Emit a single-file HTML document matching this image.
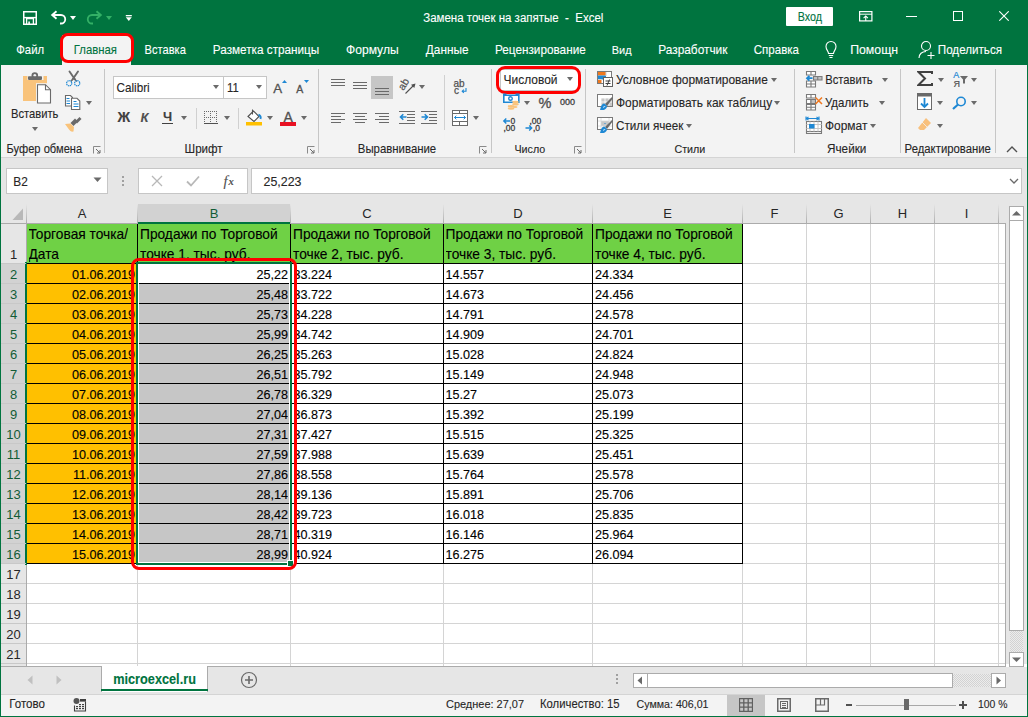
<!DOCTYPE html><html><head><meta charset="utf-8"><style>
*{box-sizing:border-box}
body{margin:0;width:1028px;height:717px;position:relative;overflow:hidden;background:#fff;font-family:"Liberation Sans",sans-serif;color:#262626}
.a{position:absolute}
.t{position:absolute;white-space:nowrap;line-height:1;-webkit-text-stroke:0.1px currentColor}
.tab{position:absolute;top:43px;font-size:12.5px;color:#fff;white-space:nowrap;line-height:14px;-webkit-text-stroke:0.1px currentColor}
.lbl{position:absolute;top:143px;font-size:12px;color:#262626;white-space:nowrap;line-height:13px}
.dd{position:absolute;width:0;height:0;border-left:3.5px solid transparent;border-right:3.5px solid transparent;border-top:4px solid #6a6a6a}
.sep{position:absolute;width:1px;background:#c8c8c8}
.rt{position:absolute;font-size:12.5px;color:#262626;white-space:nowrap;line-height:14px}
.cell{position:absolute;font-size:12.8px;color:#000;-webkit-text-stroke:0.12px #000;white-space:nowrap;line-height:14px;overflow:hidden}
.rh{position:absolute;left:1px;width:25px;font-size:13px;color:#222;text-align:center;line-height:14px}
.ch{position:absolute;top:207px;font-size:13px;color:#222;text-align:center;line-height:14px}
</style></head><body>

<div class="a" style="left:0;top:0;width:1028px;height:65px;background:#00743f"></div>
<svg class="a" style="left:22px;top:10px" width="16" height="16" viewBox="0 0 16 16">
<rect x="1.75" y="1.75" width="12.5" height="12.5" fill="none" stroke="#fff" stroke-width="1.5"/>
<path d="M2 7.6h12" stroke="#fff" stroke-width="1.4"/>
<path d="M4.6 15V8.6h6.8V15" fill="none" stroke="#fff" stroke-width="1.3"/>
<rect x="6.3" y="11.5" width="1.6" height="3.5" fill="#fff"/></svg>
<svg class="a" style="left:50px;top:9px" width="20" height="18" viewBox="0 0 20 18">
<path d="M6.5 2.3L2.2 6l4.3 3.7" fill="none" stroke="#fff" stroke-width="1.9"/>
<path d="M2.5 6H11A4.25 4.25 0 0 1 11 14.5H10" fill="none" stroke="#fff" stroke-width="1.8"/></svg>
<div class="dd" style="left:70px;top:16px;border-top-color:#fff"></div>
<svg class="a" style="left:83.2px;top:9px;transform:scaleX(-1)" width="20" height="18" viewBox="0 0 20 18">
<path d="M6.5 2.3L2.2 6l4.3 3.7" fill="none" stroke="#33b066" stroke-width="1.9"/>
<path d="M2.5 6H11A4.25 4.25 0 0 1 11 14.5H10" fill="none" stroke="#33b066" stroke-width="1.8"/></svg>
<div class="dd" style="left:106px;top:16px;border-top-color:#33b066"></div>
<svg class="a" style="left:125px;top:14px" width="8" height="8" viewBox="0 0 8 8"><rect x="0.8" y="1" width="6" height="1.3" fill="#fff"/><path d="M0.8 3.3h6L3.8 7z" fill="#fff"/></svg>
<div class="t" style="left:423.2px;top:13.27px;font-size:11.5px;color:#fff;transform:scaleY(1.1);transform-origin:0 9.73px">Замена точек на запятые&nbsp; - &nbsp;Excel</div>
<div class="a" style="left:786px;top:7px;width:47px;height:19px;background:#fff;border-radius:1px"></div>
<div class="t" style="left:797.8px;top:11.94px;font-size:10.7px;color:#00743f;transform:scaleY(1.15);transform-origin:0 9.06px">Вход</div>
<svg class="a" style="left:858px;top:10px" width="16" height="13" viewBox="0 0 16 13">
<rect x="1.6" y="1.6" width="12.3" height="9.3" fill="none" stroke="#fff" stroke-width="1.2"/>
<path d="M1.5 4.2h12.5" stroke="#fff" stroke-width="1"/><path d="M7.75 11V6M5.6 8.1l2.15-2.15 2.15 2.15" fill="none" stroke="#fff" stroke-width="1.1"/></svg>
<div class="a" style="left:906px;top:16px;width:11px;height:1px;background:#fff"></div>
<div class="a" style="left:953px;top:11px;width:10px;height:10px;border:1px solid #fff"></div>
<svg class="a" style="left:999px;top:11px" width="10" height="10" viewBox="0 0 10 10">
<path d="M0.3 0.3L9.7 9.7M9.7 0.3L0.3 9.7" stroke="#fff" stroke-width="1.1"/></svg>
<div class="a" style="left:62px;top:35px;width:69px;height:30px;background:#f3f3f3"></div>
<div class="tab" style="left:16.3px;color:#fff;font-size:11.27px;top:45.46px;line-height:1;transform:scaleY(1.08);transform-origin:0 9.54px">Файл</div>
<div class="tab" style="left:73.8px;color:#00743f;font-size:11.35px;top:45.39px;line-height:1;transform:scaleY(1.08);transform-origin:0 9.61px">Главная</div>
<div class="tab" style="left:144.6px;color:#fff;font-size:11.1px;top:44.60px;line-height:1;transform:scaleY(1.08);transform-origin:0 9.40px">Вставка</div>
<div class="tab" style="left:212.8px;color:#fff;font-size:11.74px;top:44.06px;line-height:1;transform:scaleY(1.08);transform-origin:0 9.94px">Разметка страницы</div>
<div class="tab" style="left:346px;color:#fff;font-size:12.1px;top:43.76px;line-height:1;transform:scaleY(1.08);transform-origin:0 10.24px">Формулы</div>
<div class="tab" style="left:425.8px;color:#fff;font-size:11.83px;top:44.99px;line-height:1;transform:scaleY(1.08);transform-origin:0 10.01px">Данные</div>
<div class="tab" style="left:495px;color:#fff;font-size:11.75px;top:44.05px;line-height:1;transform:scaleY(1.08);transform-origin:0 9.95px">Рецензирование</div>
<div class="tab" style="left:611.8px;color:#fff;font-size:10.92px;top:44.76px;line-height:1;transform:scaleY(1.08);transform-origin:0 9.24px">Вид</div>
<div class="tab" style="left:658.2px;color:#fff;font-size:11.88px;top:44.94px;line-height:1;transform:scaleY(1.08);transform-origin:0 10.06px">Разработчик</div>
<div class="tab" style="left:753.8px;color:#fff;font-size:11.53px;top:45.24px;line-height:1;transform:scaleY(1.08);transform-origin:0 9.76px">Справка</div>
<div class="tab" style="left:850.2px;color:#fff;font-size:12.3px;top:43.59px;line-height:1;transform:scaleY(1.08);transform-origin:0 10.41px">Помощн</div>
<div class="tab" style="left:937.8px;color:#fff;font-size:11.64px;top:44.15px;line-height:1;transform:scaleY(1.08);transform-origin:0 9.85px">Поделиться</div>
<svg class="a" style="left:824px;top:40px" width="14" height="20" viewBox="0 0 14 20">
<path d="M4.5 13.5C4.5 11 2 10 2 6.5a5 5 0 0 1 10 0c0 3.5-2.5 4.5-2.5 7z" fill="none" stroke="#fff" stroke-width="1.1"/>
<path d="M4.8 15.5h4.4M5.5 17.5h3" stroke="#fff" stroke-width="1.1"/></svg>
<svg class="a" style="left:918px;top:40px" width="18" height="20" viewBox="0 0 18 20">
<circle cx="8" cy="6" r="4.5" fill="none" stroke="#fff" stroke-width="1.1"/>
<path d="M1 18c0-4 3-6.5 7-6.5" fill="none" stroke="#fff" stroke-width="1.1"/>
<path d="M13 12v7M9.5 15.5h7" stroke="#fff" stroke-width="1.1"/></svg>
<div class="a" style="left:60px;top:33px;width:74px;height:30px;border:3px solid #ff0000;border-radius:8px"></div>
<div class="a" style="left:1px;top:65px;width:1026px;height:92px;background:#f3f3f3"></div>
<div class="a" style="left:1px;top:157px;width:1026px;height:1px;background:#d4d4d4"></div>
<svg class="a" style="left:18px;top:66px" width="40" height="40" viewBox="0 0 40 40">
<rect x="5" y="10" width="24" height="25" fill="#f9c37b"/>
<rect x="9.5" y="9" width="16" height="5" fill="#f3f3f3"/>
<rect x="10" y="10.3" width="14" height="3.6" rx="0.8" fill="#6a6a6a"/>
<circle cx="16.8" cy="9.6" r="2.4" fill="none" stroke="#6a6a6a" stroke-width="1.8"/>
<rect x="18" y="17.2" width="16" height="20.5" fill="#f3f3f3"/>
<path d="M19.5 18.7h8l5 5v13.3h-13z" fill="#fff" stroke="#6a6a6a" stroke-width="1.1"/>
<path d="M27.5 18.7v5h5" fill="none" stroke="#6a6a6a" stroke-width="1.1"/>
</svg>
<div class="t" style="left:11px;top:108.52px;font-size:11.2px;color:#262626;transform:scaleY(1.08);transform-origin:0 9.48px;">Вставить</div>
<div class="dd" style="left:31.5px;top:127px;border-top-color:#6a6a6a"></div>
<svg class="a" style="left:60px;top:66px" width="40" height="70" viewBox="0 0 40 70">
<path d="M9.5 5.5L15 13.5M18 5.5L12.5 13.5" stroke="#6a6a6a" stroke-width="1.9" stroke-linecap="round"/>
<path d="M13.8 12l-3 3.5M13.8 12l3 3.5" stroke="#6a6a6a" stroke-width="1.3"/>
<circle cx="9.2" cy="17.3" r="2.6" fill="none" stroke="#1e88d4" stroke-width="1.2" stroke-dasharray="1.4 0.6"/>
<circle cx="17.2" cy="17.3" r="2.6" fill="none" stroke="#1e88d4" stroke-width="1.2" stroke-dasharray="1.4 0.6"/>
<path d="M5.5 29.5h5l2 2v8.5h-7z" fill="#fff" stroke="#6a6a6a" stroke-width="1.1"/>
<path d="M6.5 32.5h3M6.5 35h3.5M6.5 37.5h3.5" stroke="#1e88d4" stroke-width="1"/>
<path d="M11.5 32.3h5.5l2.8 2.8v8.4h-8.3z" fill="#fff" stroke="#6a6a6a" stroke-width="1.1"/>
<path d="M13.5 35.5h3M13.5 38h5M13.5 40.5h5" stroke="#1e88d4" stroke-width="1"/>
<path d="M16 56.5l4.5-4.5" stroke="#6a6a6a" stroke-width="2.8"/>
<path d="M10.5 57l4.5-4.5 3 3-4.5 4.5z" fill="#6a6a6a"/>
<path d="M5 58l5.5-0.5 3.5 3.5-0.5 4.5c-2 0.5-3.5-0.5-4.5-2z" fill="#f9c37b"/>
</svg>
<div class="dd" style="left:85.8px;top:101px;border-top-color:#6a6a6a"></div>
<div class="t" style="left:6.5px;top:143.56px;font-size:11.15px;color:#262626;transform:scaleY(1.08);transform-origin:0 9.44px;">Буфер обмена</div>
<svg class="a" style="left:93px;top:146px" width="8" height="8" viewBox="0 0 8 8">
<path d="M0.5 7.5V0.5H7.5" fill="none" stroke="#8a8a8a" stroke-width="1"/><path d="M3 3l4 4M7 4v3H4" fill="none" stroke="#6a6a6a" stroke-width="1"/></svg>
<div class="a" style="left:104px;top:69px;width:1px;height:84px;background:#c6c6c6"></div>
<div class="a" style="left:113px;top:76px;width:111px;height:23px;background:#fff;border:1px solid #c6c6c6"></div>
<div class="a" style="left:223px;top:76px;width:44px;height:23px;background:#fff;border:1px solid #c6c6c6"></div>
<div class="t" style="left:116.5px;top:82.10px;font-size:11.7px;color:#262626;transform:scaleY(1.08);transform-origin:0 9.90px;">Calibri</div>
<div class="dd" style="left:212.5px;top:85px;border-top-color:#6a6a6a"></div>
<div class="t" style="left:227px;top:83.43px;font-size:11.3px;color:#262626;transform:scaleY(1.08);transform-origin:0 9.57px;">11</div>
<div class="dd" style="left:255.5px;top:85px;border-top-color:#6a6a6a"></div>
<div class="t" style="left:273.3px;top:81.74px;font-size:13.3px;color:#505050;-webkit-text-stroke:0.3px #505050">A</div>
<svg class="a" style="left:281.5px;top:80px" width="5" height="3"><path d="M0 3L2.5 0 5 3z" fill="#1e88d4"/></svg>
<div class="t" style="left:296.3px;top:84.11px;font-size:10.5px;color:#505050;-webkit-text-stroke:0.3px #505050">A</div>
<svg class="a" style="left:303.5px;top:80px" width="5" height="3"><path d="M0 0L2.5 3 5 0z" fill="#1e88d4"/></svg>
<div class="t" style="left:117.5px;top:110.15px;font-size:14px;color:#404040;font-weight:bold">Ж</div>
<div class="t" style="left:140.5px;top:111.00px;font-size:13px;color:#505050;font-style:italic;font-weight:bold">К</div>
<div class="t" style="left:163px;top:110.00px;font-size:13px;color:#404040;font-weight:bold">Ч</div>
<div class="a" style="left:162px;top:123px;width:11px;height:1px;background:#404040"></div>
<div class="dd" style="left:180.5px;top:116px;border-top-color:#6a6a6a"></div>
<div class="a" style="left:196px;top:108px;width:1px;height:21px;background:#d0d0d0"></div>
<svg class="a" style="left:204px;top:111px" width="14" height="14" viewBox="0 0 14 14"><rect x="0" y="0" width="1" height="1" fill="#6a6a6a"/><rect x="6" y="0" width="1" height="1" fill="#6a6a6a"/><rect x="12" y="0" width="1" height="1" fill="#6a6a6a"/><rect x="0" y="2" width="1" height="1" fill="#6a6a6a"/><rect x="6" y="2" width="1" height="1" fill="#6a6a6a"/><rect x="12" y="2" width="1" height="1" fill="#6a6a6a"/><rect x="0" y="4" width="1" height="1" fill="#6a6a6a"/><rect x="6" y="4" width="1" height="1" fill="#6a6a6a"/><rect x="12" y="4" width="1" height="1" fill="#6a6a6a"/><rect x="0" y="6" width="1" height="1" fill="#6a6a6a"/><rect x="6" y="6" width="1" height="1" fill="#6a6a6a"/><rect x="12" y="6" width="1" height="1" fill="#6a6a6a"/><rect x="0" y="8" width="1" height="1" fill="#6a6a6a"/><rect x="6" y="8" width="1" height="1" fill="#6a6a6a"/><rect x="12" y="8" width="1" height="1" fill="#6a6a6a"/><rect x="0" y="10" width="1" height="1" fill="#6a6a6a"/><rect x="6" y="10" width="1" height="1" fill="#6a6a6a"/><rect x="12" y="10" width="1" height="1" fill="#6a6a6a"/><rect x="0" y="12" width="1" height="1" fill="#6a6a6a"/><rect x="6" y="12" width="1" height="1" fill="#6a6a6a"/><rect x="12" y="12" width="1" height="1" fill="#6a6a6a"/><rect x="2" y="0" width="1" height="1" fill="#6a6a6a"/><rect x="2" y="6" width="1" height="1" fill="#6a6a6a"/><rect x="4" y="0" width="1" height="1" fill="#6a6a6a"/><rect x="4" y="6" width="1" height="1" fill="#6a6a6a"/><rect x="6" y="0" width="1" height="1" fill="#6a6a6a"/><rect x="6" y="6" width="1" height="1" fill="#6a6a6a"/><rect x="8" y="0" width="1" height="1" fill="#6a6a6a"/><rect x="8" y="6" width="1" height="1" fill="#6a6a6a"/><rect x="10" y="0" width="1" height="1" fill="#6a6a6a"/><rect x="10" y="6" width="1" height="1" fill="#6a6a6a"/>
<rect x="0" y="12" width="14" height="1" fill="#505050"/></svg>
<div class="dd" style="left:223.5px;top:116px;border-top-color:#6a6a6a"></div>
<div class="a" style="left:238px;top:108px;width:1px;height:21px;background:#d0d0d0"></div>
<svg class="a" style="left:245px;top:108px" width="18" height="18" viewBox="0 0 18 18">
<path d="M3 8.5l5.5-5.5 5.5 5.5-5 5z" fill="#fff" stroke="#505050" stroke-width="1.1"/><path d="M7.5 1.5v5" stroke="#505050" stroke-width="1.1"/>
<path d="M13.5 6.5c2 1 2.5 3 2 4.5" fill="none" stroke="#1e88d4" stroke-width="1.8"/>
<rect x="1" y="14" width="16" height="3.5" fill="#ffc000"/></svg>
<div class="dd" style="left:266.5px;top:116px;border-top-color:#6a6a6a"></div>
<div class="t" style="left:283.5px;top:110.15px;font-size:14px;color:#505050;-webkit-text-stroke:0.3px #505050">A</div>
<div class="a" style="left:280px;top:122px;width:16px;height:4px;background:#e81123"></div>
<div class="dd" style="left:300.5px;top:116px;border-top-color:#6a6a6a"></div>
<div class="t" style="left:184.5px;top:143.18px;font-size:11.6px;color:#262626;transform:scaleY(1.08);transform-origin:0 9.82px;">Шрифт</div>
<svg class="a" style="left:307px;top:146px" width="8" height="8" viewBox="0 0 8 8">
<path d="M0.5 7.5V0.5H7.5" fill="none" stroke="#8a8a8a" stroke-width="1"/><path d="M3 3l4 4M7 4v3H4" fill="none" stroke="#6a6a6a" stroke-width="1"/></svg>
<div class="a" style="left:318px;top:69px;width:1px;height:84px;background:#c6c6c6"></div>
<div class="a" style="left:331px;top:79px;width:14px;height:1px;background:#6a6a6a"></div>
<div class="a" style="left:331px;top:82px;width:14px;height:1px;background:#6a6a6a"></div>
<div class="a" style="left:331px;top:85px;width:14px;height:1px;background:#6a6a6a"></div>
<div class="a" style="left:353px;top:82px;width:14px;height:1px;background:#6a6a6a"></div>
<div class="a" style="left:353px;top:85px;width:14px;height:1px;background:#6a6a6a"></div>
<div class="a" style="left:353px;top:88px;width:14px;height:1px;background:#6a6a6a"></div>
<div class="a" style="left:371px;top:76px;width:22px;height:23px;background:#c6c6c6"></div>
<div class="a" style="left:375px;top:88px;width:14px;height:1px;background:#6a6a6a"></div>
<div class="a" style="left:375px;top:91px;width:14px;height:1px;background:#6a6a6a"></div>
<div class="a" style="left:375px;top:94px;width:14px;height:1px;background:#6a6a6a"></div>
<svg class="a" style="left:397px;top:76px" width="22" height="20" viewBox="0 0 22 20">
<text x="0" y="0" font-size="10.5" font-family="Liberation Sans" fill="#505050" stroke="#505050" stroke-width="0.2" transform="translate(6.5 15) rotate(-58)">ab</text>
<path d="M8.5 17.5L17.5 8.5" stroke="#505050" stroke-width="1.1"/><path d="M18.5 7.5l-4.5 1.2 3.3 3.3z" fill="#505050"/></svg>
<div class="dd" style="left:418.5px;top:85px;border-top-color:#6a6a6a"></div>
<div class="a" style="left:331px;top:113px;width:14px;height:1px;background:#6a6a6a"></div>
<div class="a" style="left:331px;top:116px;width:10px;height:1px;background:#6a6a6a"></div>
<div class="a" style="left:331px;top:119px;width:14px;height:1px;background:#6a6a6a"></div>
<div class="a" style="left:331px;top:122px;width:10px;height:1px;background:#6a6a6a"></div>
<div class="a" style="left:353px;top:113px;width:14px;height:1px;background:#6a6a6a"></div>
<div class="a" style="left:355px;top:116px;width:10px;height:1px;background:#6a6a6a"></div>
<div class="a" style="left:353px;top:119px;width:14px;height:1px;background:#6a6a6a"></div>
<div class="a" style="left:355px;top:122px;width:10px;height:1px;background:#6a6a6a"></div>
<div class="a" style="left:375px;top:113px;width:14px;height:1px;background:#6a6a6a"></div>
<div class="a" style="left:379px;top:116px;width:10px;height:1px;background:#6a6a6a"></div>
<div class="a" style="left:375px;top:119px;width:14px;height:1px;background:#6a6a6a"></div>
<div class="a" style="left:379px;top:122px;width:10px;height:1px;background:#6a6a6a"></div>
<div class="a" style="left:399px;top:111px;width:16px;height:1px;background:#6a6a6a"></div>
<div class="a" style="left:407px;top:114px;width:8px;height:1px;background:#6a6a6a"></div>
<div class="a" style="left:407px;top:117px;width:8px;height:1px;background:#6a6a6a"></div>
<div class="a" style="left:407px;top:120px;width:8px;height:1px;background:#6a6a6a"></div>
<div class="a" style="left:399px;top:123px;width:16px;height:1px;background:#6a6a6a"></div>
<svg class="a" style="left:399px;top:113px" width="8" height="8"><path d="M7.5 4H1.5M4.3 1.2L1.5 4l2.8 2.8" fill="none" stroke="#1e88d4" stroke-width="1.6"/></svg>
<div class="a" style="left:421px;top:111px;width:16px;height:1px;background:#6a6a6a"></div>
<div class="a" style="left:429px;top:114px;width:8px;height:1px;background:#6a6a6a"></div>
<div class="a" style="left:429px;top:117px;width:8px;height:1px;background:#6a6a6a"></div>
<div class="a" style="left:429px;top:120px;width:8px;height:1px;background:#6a6a6a"></div>
<div class="a" style="left:421px;top:123px;width:16px;height:1px;background:#6a6a6a"></div>
<svg class="a" style="left:421px;top:113px" width="8" height="8"><path d="M0.5 4h6M3.7 1.2L6.5 4 3.7 6.8" fill="none" stroke="#1e88d4" stroke-width="1.6"/></svg>
<div class="a" style="left:444px;top:75px;width:1px;height:55px;background:#d0d0d0"></div>
<div class="t" style="left:453.5px;top:78.53px;font-size:10px;color:#505050;-webkit-text-stroke:0.25px #505050">ab</div>
<div class="t" style="left:454px;top:85.53px;font-size:10px;color:#505050;-webkit-text-stroke:0.25px #505050">c</div>
<svg class="a" style="left:460.5px;top:88px" width="6" height="6"><path d="M5 0v3.2H1.2M2.8 1.6L1.2 3.2l1.6 1.6" fill="none" stroke="#1e88d4" stroke-width="1.1"/></svg>
<svg class="a" style="left:452px;top:110px" width="16" height="16" viewBox="0 0 16 16">
<rect x="0.5" y="0.5" width="15" height="15" fill="#fff" stroke="#6a6a6a"/><path d="M0.5 3.5h15M0.5 11.5h15M7.5 0.5v3M7.5 11.5v4" stroke="#6a6a6a"/>
<path d="M2.5 7.5h11M4.3 5.7L2.5 7.5l1.8 1.8M11.7 5.7L13.5 7.5l-1.8 1.8" fill="none" stroke="#1e88d4" stroke-width="1"/></svg>
<div class="dd" style="left:472.5px;top:116px;border-top-color:#6a6a6a"></div>
<div class="t" style="left:357.8px;top:144.35px;font-size:11.4px;color:#262626;transform:scaleY(1.08);transform-origin:0 9.65px;">Выравнивание</div>
<svg class="a" style="left:479px;top:146px" width="8" height="8" viewBox="0 0 8 8">
<path d="M0.5 7.5V0.5H7.5" fill="none" stroke="#8a8a8a" stroke-width="1"/><path d="M3 3l4 4M7 4v3H4" fill="none" stroke="#6a6a6a" stroke-width="1"/></svg>
<div class="a" style="left:491px;top:69px;width:1px;height:84px;background:#c6c6c6"></div>
<div class="a" style="left:500px;top:69px;width:79px;height:22px;background:#fff;border:1px solid #c6c6c6"></div>
<div class="t" style="left:503.6px;top:74.88px;font-size:11.95px;color:#262626;transform:scaleY(1.08);transform-origin:0 10.12px;">Числовой</div>
<div class="dd" style="left:566.5px;top:77px;border-top-color:#6a6a6a"></div>
<div class="a" style="left:496px;top:66px;width:85px;height:28px;border:3px solid #ff0000;border-radius:9px"></div>
<svg class="a" style="left:502px;top:93px" width="20" height="18" viewBox="0 0 20 18">
<path d="M1.8 2.2h15v7h-15z" fill="#fff" stroke="#1e88d4" stroke-width="1.6"/>
<path d="M1 1.4h3.5M13.5 1.4h4" stroke="#1e88d4" stroke-width="1.6"/>
<circle cx="8.5" cy="5.5" r="1.8" fill="none" stroke="#1e88d4" stroke-width="1.4"/>
<ellipse cx="13.5" cy="9" rx="3.3" ry="1.2" fill="#f9c37b"/><ellipse cx="13.5" cy="11.3" rx="3.3" ry="1.2" fill="#f9c37b"/>
<ellipse cx="9" cy="13.2" rx="3.3" ry="1.2" fill="#f9c37b"/><ellipse cx="9" cy="15.5" rx="3.3" ry="1.2" fill="#f9c37b"/>
<ellipse cx="13" cy="14" rx="2.5" ry="1" fill="#f9c37b"/></svg>
<div class="dd" style="left:523.5px;top:101px;border-top-color:#6a6a6a"></div>
<div class="t" style="left:538.5px;top:95.73px;font-size:14.5px;color:#505050;-webkit-text-stroke:0.35px #505050">%</div>
<div class="t" style="left:560px;top:97.68px;font-size:9px;color:#404040;-webkit-text-stroke:0.3px #404040">000</div>
<svg class="a" style="left:502px;top:116px" width="18" height="18" viewBox="0 0 18 18">
<path d="M8 5H1.8M4.3 2.5L1.8 5l2.5 2.5" fill="none" stroke="#1e88d4" stroke-width="1.4"/>
<text x="8.5" y="8.3" font-size="8.5" font-family="Liberation Sans" fill="#404040" stroke="#404040" stroke-width="0.3">0</text>
<text x="1.5" y="15" font-size="8.5" font-family="Liberation Sans" fill="#404040" stroke="#404040" stroke-width="0.3">,00</text></svg>
<svg class="a" style="left:524px;top:116px" width="18" height="18" viewBox="0 0 18 18">
<text x="5.5" y="8.3" font-size="8.5" font-family="Liberation Sans" fill="#404040" stroke="#404040" stroke-width="0.3">,00</text>
<path d="M1.5 12h6.2M5.2 9.5L7.7 12l-2.5 2.5" fill="none" stroke="#1e88d4" stroke-width="1.4"/>
<text x="9" y="15" font-size="8.5" font-family="Liberation Sans" fill="#404040" stroke="#404040" stroke-width="0.3">,0</text></svg>
<div class="t" style="left:514.5px;top:143.94px;font-size:10.7px;color:#262626;transform:scaleY(1.08);transform-origin:0 9.06px;">Число</div>
<svg class="a" style="left:574px;top:146px" width="8" height="8" viewBox="0 0 8 8">
<path d="M0.5 7.5V0.5H7.5" fill="none" stroke="#8a8a8a" stroke-width="1"/><path d="M3 3l4 4M7 4v3H4" fill="none" stroke="#6a6a6a" stroke-width="1"/></svg>
<div class="a" style="left:585px;top:69px;width:1px;height:84px;background:#c6c6c6"></div>
<svg class="a" style="left:596px;top:70px" width="18" height="18" viewBox="0 0 18 18">
<rect x="1.5" y="1.5" width="14" height="12" fill="#fff" stroke="#7a7a7a"/>
<rect x="2" y="2" width="8" height="3.5" fill="#f0781e"/><rect x="2" y="5.5" width="8" height="4" fill="#1e88d4"/><rect x="2" y="9.5" width="3.5" height="3.5" fill="#f0781e"/>
<path d="M10 2v4M2 9.5h4" stroke="#d0d0d0"/>
<rect x="7.5" y="7.5" width="9" height="9" fill="#fff" stroke="#606060"/>
<path d="M9.5 11h5M9.5 13.5h5M13.5 9.5l-2.5 6" stroke="#404040" stroke-width="1"/></svg>
<div class="t" style="left:616px;top:74.88px;font-size:11.95px;color:#262626;transform:scaleY(1.08);transform-origin:0 10.12px;">Условное форматирование</div>
<div class="dd" style="left:770.5px;top:78px;border-top-color:#6a6a6a"></div>
<svg class="a" style="left:596px;top:93px" width="18" height="18" viewBox="0 0 18 18">
<rect x="1.5" y="1.5" width="15" height="12" fill="#c8c8c8" stroke="#7a7a7a"/>
<rect x="2" y="2" width="14" height="3" fill="#fff"/><rect x="2" y="2" width="3" height="11" fill="#fff"/>
<path d="M2 5h14M2 9h14M5 2v11M9 2v11M13 2v11" stroke="#fff" stroke-width="0.8"/>
<path d="M17 5l-1 -1-7 7 2 2z" fill="#6a6a6a"/><path d="M8.5 10.5c-2 0-3 1.5-3.5 3L4 17h3.5c2-0.5 3.5-2 3.5-4z" fill="#1e88d4"/><path d="M7 14.5c0.7-0.8 1.5-1 2.2-1" stroke="#fff" stroke-width="0.8" fill="none"/></svg>
<div class="t" style="left:616px;top:96.84px;font-size:12.0px;color:#262626;transform:scaleY(1.08);transform-origin:0 10.16px;">Форматировать как таблицу</div>
<div class="dd" style="left:773.5px;top:101px;border-top-color:#6a6a6a"></div>
<svg class="a" style="left:596px;top:116px" width="18" height="18" viewBox="0 0 18 18">
<rect x="1.5" y="1.5" width="15" height="12" fill="#fff" stroke="#7a7a7a"/>
<rect x="5" y="5" width="8" height="5" fill="#c8c8c8"/><path d="M2 5h14M2 10h14M5 2v11M13 2v11" stroke="#d8d8d8" stroke-width="0.8"/>
<rect x="8.5" y="7" width="1" height="1" fill="#1e88d4"/>
<path d="M17 5l-1 -1-7 7 2 2z" fill="#6a6a6a"/><path d="M8.5 10.5c-2 0-3 1.5-3.5 3L4 17h3.5c2-0.5 3.5-2 3.5-4z" fill="#1e88d4"/><path d="M7 14.5c0.7-0.8 1.5-1 2.2-1" stroke="#fff" stroke-width="0.8" fill="none"/></svg>
<div class="t" style="left:616px;top:120.10px;font-size:11.7px;color:#262626;transform:scaleY(1.08);transform-origin:0 9.90px;">Стили ячеек</div>
<div class="dd" style="left:685.5px;top:124px;border-top-color:#6a6a6a"></div>
<div class="t" style="left:674.5px;top:143.94px;font-size:10.7px;color:#262626;transform:scaleY(1.08);transform-origin:0 9.06px;">Стили</div>
<div class="a" style="left:794px;top:69px;width:1px;height:84px;background:#c6c6c6"></div>
<svg class="a" style="left:805px;top:70px" width="18" height="18" viewBox="0 0 18 18">
<path d="M1.5 1.5h9v3.5h-9zM6 1.5v3.5" fill="#fff" stroke="#7a7a7a" stroke-width="1.1"/>
<path d="M8.5 6.5h8.5v3.5h-8.5zM12.75 6.5v3.5" fill="#c0c0c0" stroke="#7a7a7a" stroke-width="1.1"/>
<path d="M1.5 11h9v6h-9zM6 11v6M1.5 14h9" fill="#fff" stroke="#7a7a7a" stroke-width="1.1"/>
<path d="M7.5 8.2H2M4.4 5.8L2 8.2l2.4 2.4" fill="none" stroke="#1e88d4" stroke-width="1.8"/></svg>
<div class="t" style="left:825.2px;top:74.52px;font-size:11.2px;color:#262626;transform:scaleY(1.08);transform-origin:0 9.48px;">Вставить</div>
<div class="dd" style="left:881.5px;top:78px;border-top-color:#6a6a6a"></div>
<svg class="a" style="left:805px;top:93px" width="18" height="18" viewBox="0 0 18 18">
<path d="M1.5 1.5h9v3.5h-9zM6 1.5v3.5" fill="#fff" stroke="#7a7a7a" stroke-width="1.1"/>
<path d="M1.5 6.5h4.5v4h-4.5z" fill="#fff" stroke="#7a7a7a" stroke-width="1.1"/><path d="M6 6.5h4.5v4h-4.5z" fill="#c0c0c0" stroke="#7a7a7a" stroke-width="1.1"/>
<path d="M1.5 11.5h9v5.5h-9zM6 11.5v5.5M1.5 14.2h9" fill="#fff" stroke="#7a7a7a" stroke-width="1.1"/>
<path d="M10.5 4.5l6.5 6.5M17 4.5l-6.5 6.5" stroke="#f0781e" stroke-width="1.5"/></svg>
<div class="t" style="left:825px;top:98.31px;font-size:11.45px;color:#262626;transform:scaleY(1.08);transform-origin:0 9.69px;">Удалить</div>
<div class="dd" style="left:878.5px;top:101px;border-top-color:#6a6a6a"></div>
<svg class="a" style="left:805px;top:116px" width="18" height="18" viewBox="0 0 18 18">
<path d="M1.5 2.5h12M1 0.5v4M14 0.5v4M3.5 0.8L1.5 2.5l2 1.7M11.5 0.8l2 1.7-2 1.7" fill="none" stroke="#1e88d4" stroke-width="1.1"/>
<rect x="1.5" y="5.5" width="15" height="10" fill="#fff" stroke="#7a7a7a" stroke-width="1.1"/>
<path d="M1.5 8.5h15M1.5 12.5h15M5 5.5v10M9 5.5v10M13 5.5v10" stroke="#c8c8c8" stroke-width="1"/>
<path d="M1.5 15.5v2h15v-2" fill="none" stroke="#7a7a7a" stroke-width="1.1"/>
<rect x="4" y="8" width="5.5" height="4.5" fill="#1e88d4"/></svg>
<div class="t" style="left:825px;top:120.88px;font-size:11.95px;color:#262626;transform:scaleY(1.08);transform-origin:0 10.12px;">Формат</div>
<div class="dd" style="left:869.5px;top:124px;border-top-color:#6a6a6a"></div>
<div class="t" style="left:827px;top:143.05px;font-size:11.75px;color:#262626;transform:scaleY(1.08);transform-origin:0 9.95px;">Ячейки</div>
<div class="a" style="left:900px;top:69px;width:1px;height:84px;background:#c6c6c6"></div>
<svg class="a" style="left:917px;top:71px" width="16" height="15" viewBox="0 0 16 15">
<path d="M15 3V1H1.5l6.5 6.5-6.5 6.5H15v-2" fill="none" stroke="#404040" stroke-width="2"/></svg>
<div class="dd" style="left:937.5px;top:78px;border-top-color:#6a6a6a"></div>
<div class="t" style="left:953.2px;top:70.88px;font-size:9px;color:#1e88d4;-webkit-text-stroke:0.2px #1e88d4">A</div>
<div class="t" style="left:953.5px;top:79.88px;font-size:9px;color:#505050;-webkit-text-stroke:0.2px #505050">Я</div>
<svg class="a" style="left:960px;top:76px" width="9" height="8"><path d="M0 0h8L5 3.5v4h-2v-4z" fill="#6a6a6a"/></svg>
<div class="dd" style="left:971.0px;top:78px;border-top-color:#6a6a6a"></div>
<svg class="a" style="left:917px;top:93px" width="15" height="17" viewBox="0 0 15 17">
<rect x="0.5" y="0.5" width="14" height="16" fill="#fff" stroke="#6a6a6a"/><rect x="0.5" y="0.5" width="14" height="3" fill="#6a6a6a"/>
<path d="M7.5 5v9M4 10.5l3.5 3.5 3.5-3.5" fill="none" stroke="#1e88d4" stroke-width="1.8"/></svg>
<div class="dd" style="left:936.5px;top:101px;border-top-color:#6a6a6a"></div>
<svg class="a" style="left:952px;top:96px" width="15" height="14" viewBox="0 0 15 14">
<circle cx="9" cy="5.5" r="4.2" fill="none" stroke="#1e88d4" stroke-width="1.6"/><path d="M6 8.5L1 13" stroke="#1e88d4" stroke-width="2.2"/></svg>
<div class="dd" style="left:971.0px;top:101px;border-top-color:#6a6a6a"></div>
<svg class="a" style="left:917px;top:117px" width="15" height="15" viewBox="0 0 15 15">
<path d="M9 1l5 5-7 7H3L1 11z" fill="#f8c07c"/><path d="M5 5l5 5" stroke="#f3f3f3" stroke-width="0.8"/></svg>
<div class="dd" style="left:936.5px;top:124px;border-top-color:#6a6a6a"></div>
<div class="t" style="left:904.6px;top:144.40px;font-size:11.34px;color:#262626;transform:scaleY(1.08);transform-origin:0 9.60px;">Редактирование</div>
<div class="a" style="left:995px;top:69px;width:1px;height:84px;background:#c6c6c6"></div>
<svg class="a" style="left:1006px;top:145px" width="12" height="8"><path d="M1 7l5-5 5 5" fill="none" stroke="#505050" stroke-width="1.4"/></svg>
<div class="a" style="left:1px;top:158px;width:1026px;height:506px;background:#e6e6e6"></div>
<div class="a" style="left:6px;top:168px;width:102px;height:26px;background:#fff;border:1px solid #c6c6c6"></div>
<div class="t" style="left:13.3px;top:176.97px;font-size:11.85px;color:#262626;transform:scaleY(1.08);transform-origin:0 10.03px;">B2</div>
<svg class="a" style="left:93px;top:177px" width="9" height="6"><path d="M0.5 0.5h8L4.5 5z" fill="#6a6a6a"/></svg>
<div class="a" style="left:122px;top:176px;width:2px;height:2px;background:#a0a0a0"></div>
<div class="a" style="left:122px;top:180px;width:2px;height:2px;background:#a0a0a0"></div>
<div class="a" style="left:122px;top:184px;width:2px;height:2px;background:#a0a0a0"></div>
<div class="a" style="left:138px;top:168px;width:110px;height:26px;background:#fff;border:1px solid #c6c6c6"></div>
<svg class="a" style="left:151px;top:175px" width="12" height="12"><path d="M1 1l10 10M11 1L1 11" stroke="#b8b8b8" stroke-width="1.3"/></svg>
<svg class="a" style="left:186px;top:175px" width="14" height="12"><path d="M1 6.5l4 4L13 1.5" fill="none" stroke="#b8b8b8" stroke-width="1.8"/></svg>
<div class="t" style="left:223.5px;top:173.73px;font-size:14.5px;color:#505050;font-family:'Liberation Serif',serif;font-style:italic">f</div>
<div class="t" style="left:228.5px;top:176.61px;font-size:10.5px;color:#505050;font-family:'Liberation Serif',serif;font-style:italic;font-weight:bold">x</div>
<div class="a" style="left:251px;top:168px;width:771px;height:26px;background:#fff;border:1px solid #c6c6c6"></div>
<div class="t" style="left:263.5px;top:176.49px;font-size:12.42px;color:#262626;transform:scaleY(1.08);transform-origin:0 10.51px;">25,223</div>
<svg class="a" style="left:1009px;top:178px" width="10" height="6"><path d="M1 1l4 4 4-4" fill="none" stroke="#6a6a6a" stroke-width="1.3"/></svg>
<div class="a" style="left:27px;top:224px;width:978px;height:442px;background:#fff"></div>
<div class="a" style="left:1px;top:204px;width:1004px;height:20px;background:#e6e6e6"></div>
<div class="a" style="left:138px;top:204px;width:152px;height:20px;background:#d2d2d2"></div>
<div class="a" style="left:1px;top:224px;width:25px;height:442px;background:#e6e6e6"></div>
<div class="a" style="left:1px;top:264px;width:25px;height:300px;background:#d2d2d2"></div>
<div class="a" style="left:1px;top:223px;width:1005px;height:1px;background:#ababab"></div>
<div class="a" style="left:138px;top:222px;width:153px;height:2px;background:#00743f"></div>
<div class="a" style="left:26px;top:204px;width:1px;height:20px;background:linear-gradient(#e6e6e6,#ababab)"></div>
<div class="a" style="left:137px;top:204px;width:1px;height:20px;background:linear-gradient(#e6e6e6,#ababab)"></div>
<div class="a" style="left:290px;top:204px;width:1px;height:20px;background:linear-gradient(#e6e6e6,#ababab)"></div>
<div class="a" style="left:443px;top:204px;width:1px;height:20px;background:linear-gradient(#e6e6e6,#ababab)"></div>
<div class="a" style="left:592px;top:204px;width:1px;height:20px;background:linear-gradient(#e6e6e6,#ababab)"></div>
<div class="a" style="left:742px;top:204px;width:1px;height:20px;background:linear-gradient(#e6e6e6,#ababab)"></div>
<div class="a" style="left:806px;top:204px;width:1px;height:20px;background:linear-gradient(#e6e6e6,#ababab)"></div>
<div class="a" style="left:870px;top:204px;width:1px;height:20px;background:linear-gradient(#e6e6e6,#ababab)"></div>
<div class="a" style="left:934px;top:204px;width:1px;height:20px;background:linear-gradient(#e6e6e6,#ababab)"></div>
<div class="a" style="left:998px;top:204px;width:1px;height:20px;background:linear-gradient(#e6e6e6,#ababab)"></div>
<div class="a" style="left:26px;top:224px;width:1px;height:442px;background:#ababab"></div>
<div class="a" style="left:25px;top:262px;width:2px;height:303px;background:#00743f"></div>
<svg class="a" style="left:12px;top:208px" width="12" height="13"><path d="M11 0.5V12H0.5z" fill="#b8b8b8"/></svg>
<div class="ch" style="left:27px;width:110px;color:#262626">A</div>
<div class="ch" style="left:138px;width:152px;color:#115c35">B</div>
<div class="ch" style="left:291px;width:152px;color:#262626">C</div>
<div class="ch" style="left:444px;width:148px;color:#262626">D</div>
<div class="ch" style="left:593px;width:149px;color:#262626">E</div>
<div class="ch" style="left:743px;width:63px;color:#262626">F</div>
<div class="ch" style="left:807px;width:63px;color:#262626">G</div>
<div class="ch" style="left:871px;width:63px;color:#262626">H</div>
<div class="ch" style="left:935px;width:63px;color:#262626">I</div>
<div class="a" style="left:27px;top:263px;width:978px;height:1px;background:#d4d4d4"></div>
<div class="a" style="left:1px;top:263px;width:25px;height:1px;background:#c8c8c8"></div>
<div class="a" style="left:27px;top:283px;width:978px;height:1px;background:#d4d4d4"></div>
<div class="a" style="left:1px;top:283px;width:25px;height:1px;background:#c8c8c8"></div>
<div class="a" style="left:27px;top:303px;width:978px;height:1px;background:#d4d4d4"></div>
<div class="a" style="left:1px;top:303px;width:25px;height:1px;background:#c8c8c8"></div>
<div class="a" style="left:27px;top:323px;width:978px;height:1px;background:#d4d4d4"></div>
<div class="a" style="left:1px;top:323px;width:25px;height:1px;background:#c8c8c8"></div>
<div class="a" style="left:27px;top:343px;width:978px;height:1px;background:#d4d4d4"></div>
<div class="a" style="left:1px;top:343px;width:25px;height:1px;background:#c8c8c8"></div>
<div class="a" style="left:27px;top:363px;width:978px;height:1px;background:#d4d4d4"></div>
<div class="a" style="left:1px;top:363px;width:25px;height:1px;background:#c8c8c8"></div>
<div class="a" style="left:27px;top:383px;width:978px;height:1px;background:#d4d4d4"></div>
<div class="a" style="left:1px;top:383px;width:25px;height:1px;background:#c8c8c8"></div>
<div class="a" style="left:27px;top:403px;width:978px;height:1px;background:#d4d4d4"></div>
<div class="a" style="left:1px;top:403px;width:25px;height:1px;background:#c8c8c8"></div>
<div class="a" style="left:27px;top:423px;width:978px;height:1px;background:#d4d4d4"></div>
<div class="a" style="left:1px;top:423px;width:25px;height:1px;background:#c8c8c8"></div>
<div class="a" style="left:27px;top:443px;width:978px;height:1px;background:#d4d4d4"></div>
<div class="a" style="left:1px;top:443px;width:25px;height:1px;background:#c8c8c8"></div>
<div class="a" style="left:27px;top:463px;width:978px;height:1px;background:#d4d4d4"></div>
<div class="a" style="left:1px;top:463px;width:25px;height:1px;background:#c8c8c8"></div>
<div class="a" style="left:27px;top:483px;width:978px;height:1px;background:#d4d4d4"></div>
<div class="a" style="left:1px;top:483px;width:25px;height:1px;background:#c8c8c8"></div>
<div class="a" style="left:27px;top:503px;width:978px;height:1px;background:#d4d4d4"></div>
<div class="a" style="left:1px;top:503px;width:25px;height:1px;background:#c8c8c8"></div>
<div class="a" style="left:27px;top:523px;width:978px;height:1px;background:#d4d4d4"></div>
<div class="a" style="left:1px;top:523px;width:25px;height:1px;background:#c8c8c8"></div>
<div class="a" style="left:27px;top:543px;width:978px;height:1px;background:#d4d4d4"></div>
<div class="a" style="left:1px;top:543px;width:25px;height:1px;background:#c8c8c8"></div>
<div class="a" style="left:27px;top:563px;width:978px;height:1px;background:#d4d4d4"></div>
<div class="a" style="left:1px;top:563px;width:25px;height:1px;background:#c8c8c8"></div>
<div class="a" style="left:27px;top:583px;width:978px;height:1px;background:#d4d4d4"></div>
<div class="a" style="left:1px;top:583px;width:25px;height:1px;background:#c8c8c8"></div>
<div class="a" style="left:27px;top:603px;width:978px;height:1px;background:#d4d4d4"></div>
<div class="a" style="left:1px;top:603px;width:25px;height:1px;background:#c8c8c8"></div>
<div class="a" style="left:27px;top:623px;width:978px;height:1px;background:#d4d4d4"></div>
<div class="a" style="left:1px;top:623px;width:25px;height:1px;background:#c8c8c8"></div>
<div class="a" style="left:27px;top:643px;width:978px;height:1px;background:#d4d4d4"></div>
<div class="a" style="left:1px;top:643px;width:25px;height:1px;background:#c8c8c8"></div>
<div class="a" style="left:27px;top:663px;width:978px;height:1px;background:#d4d4d4"></div>
<div class="a" style="left:1px;top:663px;width:25px;height:1px;background:#c8c8c8"></div>
<div class="a" style="left:137px;top:224px;width:1px;height:442px;background:#d4d4d4"></div>
<div class="a" style="left:290px;top:224px;width:1px;height:442px;background:#d4d4d4"></div>
<div class="a" style="left:443px;top:224px;width:1px;height:442px;background:#d4d4d4"></div>
<div class="a" style="left:592px;top:224px;width:1px;height:442px;background:#d4d4d4"></div>
<div class="a" style="left:742px;top:224px;width:1px;height:442px;background:#d4d4d4"></div>
<div class="a" style="left:806px;top:224px;width:1px;height:442px;background:#d4d4d4"></div>
<div class="a" style="left:870px;top:224px;width:1px;height:442px;background:#d4d4d4"></div>
<div class="a" style="left:934px;top:224px;width:1px;height:442px;background:#d4d4d4"></div>
<div class="a" style="left:998px;top:224px;width:1px;height:442px;background:#d4d4d4"></div>
<div class="a" style="left:1005px;top:223px;width:1px;height:444px;background:#ababab"></div>
<div class="rh" style="top:248px;color:#262626">1</div>
<div class="rh" style="top:268px;color:#115c35">2</div>
<div class="rh" style="top:288px;color:#115c35">3</div>
<div class="rh" style="top:308px;color:#115c35">4</div>
<div class="rh" style="top:328px;color:#115c35">5</div>
<div class="rh" style="top:348px;color:#115c35">6</div>
<div class="rh" style="top:368px;color:#115c35">7</div>
<div class="rh" style="top:388px;color:#115c35">8</div>
<div class="rh" style="top:408px;color:#115c35">9</div>
<div class="rh" style="top:428px;color:#115c35">10</div>
<div class="rh" style="top:448px;color:#115c35">11</div>
<div class="rh" style="top:468px;color:#115c35">12</div>
<div class="rh" style="top:488px;color:#115c35">13</div>
<div class="rh" style="top:508px;color:#115c35">14</div>
<div class="rh" style="top:528px;color:#115c35">15</div>
<div class="rh" style="top:548px;color:#115c35">16</div>
<div class="rh" style="top:568px;color:#262626">17</div>
<div class="rh" style="top:588px;color:#262626">18</div>
<div class="rh" style="top:608px;color:#262626">19</div>
<div class="rh" style="top:628px;color:#262626">20</div>
<div class="rh" style="top:648px;color:#262626">21</div>
<div class="a" style="left:27px;top:224px;width:716px;height:39px;background:#6fd145"></div>
<div class="a" style="left:27px;top:264px;width:110px;height:299px;background:#ffc000"></div>
<div class="a" style="left:139px;top:284px;width:150px;height:278px;background:#c6c6c6"></div>
<div class="a" style="left:27px;top:263px;width:716px;height:1px;background:#000"></div>
<div class="a" style="left:27px;top:283px;width:716px;height:1px;background:#000"></div>
<div class="a" style="left:27px;top:303px;width:716px;height:1px;background:#000"></div>
<div class="a" style="left:27px;top:323px;width:716px;height:1px;background:#000"></div>
<div class="a" style="left:27px;top:343px;width:716px;height:1px;background:#000"></div>
<div class="a" style="left:27px;top:363px;width:716px;height:1px;background:#000"></div>
<div class="a" style="left:27px;top:383px;width:716px;height:1px;background:#000"></div>
<div class="a" style="left:27px;top:403px;width:716px;height:1px;background:#000"></div>
<div class="a" style="left:27px;top:423px;width:716px;height:1px;background:#000"></div>
<div class="a" style="left:27px;top:443px;width:716px;height:1px;background:#000"></div>
<div class="a" style="left:27px;top:463px;width:716px;height:1px;background:#000"></div>
<div class="a" style="left:27px;top:483px;width:716px;height:1px;background:#000"></div>
<div class="a" style="left:27px;top:503px;width:716px;height:1px;background:#000"></div>
<div class="a" style="left:27px;top:523px;width:716px;height:1px;background:#000"></div>
<div class="a" style="left:27px;top:543px;width:716px;height:1px;background:#000"></div>
<div class="a" style="left:27px;top:563px;width:716px;height:1px;background:#000"></div>
<div class="a" style="left:27px;top:563px;width:716px;height:1px;background:#000"></div>
<div class="a" style="left:137px;top:224px;width:1px;height:340px;background:#000"></div>
<div class="a" style="left:290px;top:224px;width:1px;height:340px;background:#000"></div>
<div class="a" style="left:443px;top:224px;width:1px;height:340px;background:#000"></div>
<div class="a" style="left:592px;top:224px;width:1px;height:340px;background:#000"></div>
<div class="a" style="left:742px;top:224px;width:1px;height:340px;background:#000"></div>
<div class="cell" style="left:28.5px;top:228px;font-size:13.75px">Торговая точка/</div>
<div class="cell" style="left:28.5px;top:248px;font-size:13.75px">Дата</div>
<div class="cell" style="left:140px;top:228px;font-size:13.75px">Продажи по Торговой</div>
<div class="cell" style="left:140px;top:248px;font-size:13.75px">точке 1, тыс. руб.</div>
<div class="cell" style="left:293px;top:228px;font-size:13.75px">Продажи по Торговой</div>
<div class="cell" style="left:293px;top:248px;font-size:13.75px">точке 2, тыс. руб.</div>
<div class="cell" style="left:445.5px;top:228px;font-size:13.75px">Продажи по Торговой</div>
<div class="cell" style="left:445.5px;top:248px;font-size:13.75px">точке 3, тыс. руб.</div>
<div class="cell" style="left:595px;top:228px;font-size:13.75px">Продажи по Торговой</div>
<div class="cell" style="left:595px;top:248px;font-size:13.75px">точке 4, тыс. руб.</div>
<div class="cell" style="left:27px;top:268px;width:108px;text-align:right;font-size:12.6px">01.06.2019</div>
<div class="cell" style="left:140px;top:268px;width:148px;text-align:right;font-size:12.6px">25,22</div>
<div class="cell" style="left:293.5px;top:268px;font-size:12.6px">33.224</div>
<div class="cell" style="left:445.5px;top:268px;font-size:12.6px">14.557</div>
<div class="cell" style="left:595px;top:268px;font-size:12.6px">24.334</div>
<div class="cell" style="left:27px;top:288px;width:108px;text-align:right;font-size:12.6px">02.06.2019</div>
<div class="cell" style="left:140px;top:288px;width:148px;text-align:right;font-size:12.6px">25,48</div>
<div class="cell" style="left:293.5px;top:288px;font-size:12.6px">33.722</div>
<div class="cell" style="left:445.5px;top:288px;font-size:12.6px">14.673</div>
<div class="cell" style="left:595px;top:288px;font-size:12.6px">24.456</div>
<div class="cell" style="left:27px;top:308px;width:108px;text-align:right;font-size:12.6px">03.06.2019</div>
<div class="cell" style="left:140px;top:308px;width:148px;text-align:right;font-size:12.6px">25,73</div>
<div class="cell" style="left:293.5px;top:308px;font-size:12.6px">34.228</div>
<div class="cell" style="left:445.5px;top:308px;font-size:12.6px">14.791</div>
<div class="cell" style="left:595px;top:308px;font-size:12.6px">24.578</div>
<div class="cell" style="left:27px;top:328px;width:108px;text-align:right;font-size:12.6px">04.06.2019</div>
<div class="cell" style="left:140px;top:328px;width:148px;text-align:right;font-size:12.6px">25,99</div>
<div class="cell" style="left:293.5px;top:328px;font-size:12.6px">34.742</div>
<div class="cell" style="left:445.5px;top:328px;font-size:12.6px">14.909</div>
<div class="cell" style="left:595px;top:328px;font-size:12.6px">24.701</div>
<div class="cell" style="left:27px;top:348px;width:108px;text-align:right;font-size:12.6px">05.06.2019</div>
<div class="cell" style="left:140px;top:348px;width:148px;text-align:right;font-size:12.6px">26,25</div>
<div class="cell" style="left:293.5px;top:348px;font-size:12.6px">35.263</div>
<div class="cell" style="left:445.5px;top:348px;font-size:12.6px">15.028</div>
<div class="cell" style="left:595px;top:348px;font-size:12.6px">24.824</div>
<div class="cell" style="left:27px;top:368px;width:108px;text-align:right;font-size:12.6px">06.06.2019</div>
<div class="cell" style="left:140px;top:368px;width:148px;text-align:right;font-size:12.6px">26,51</div>
<div class="cell" style="left:293.5px;top:368px;font-size:12.6px">35.792</div>
<div class="cell" style="left:445.5px;top:368px;font-size:12.6px">15.149</div>
<div class="cell" style="left:595px;top:368px;font-size:12.6px">24.948</div>
<div class="cell" style="left:27px;top:388px;width:108px;text-align:right;font-size:12.6px">07.06.2019</div>
<div class="cell" style="left:140px;top:388px;width:148px;text-align:right;font-size:12.6px">26,78</div>
<div class="cell" style="left:293.5px;top:388px;font-size:12.6px">36.329</div>
<div class="cell" style="left:445.5px;top:388px;font-size:12.6px">15.27</div>
<div class="cell" style="left:595px;top:388px;font-size:12.6px">25.073</div>
<div class="cell" style="left:27px;top:408px;width:108px;text-align:right;font-size:12.6px">08.06.2019</div>
<div class="cell" style="left:140px;top:408px;width:148px;text-align:right;font-size:12.6px">27,04</div>
<div class="cell" style="left:293.5px;top:408px;font-size:12.6px">36.873</div>
<div class="cell" style="left:445.5px;top:408px;font-size:12.6px">15.392</div>
<div class="cell" style="left:595px;top:408px;font-size:12.6px">25.199</div>
<div class="cell" style="left:27px;top:428px;width:108px;text-align:right;font-size:12.6px">09.06.2019</div>
<div class="cell" style="left:140px;top:428px;width:148px;text-align:right;font-size:12.6px">27,31</div>
<div class="cell" style="left:293.5px;top:428px;font-size:12.6px">37.427</div>
<div class="cell" style="left:445.5px;top:428px;font-size:12.6px">15.515</div>
<div class="cell" style="left:595px;top:428px;font-size:12.6px">25.325</div>
<div class="cell" style="left:27px;top:448px;width:108px;text-align:right;font-size:12.6px">10.06.2019</div>
<div class="cell" style="left:140px;top:448px;width:148px;text-align:right;font-size:12.6px">27,59</div>
<div class="cell" style="left:293.5px;top:448px;font-size:12.6px">37.988</div>
<div class="cell" style="left:445.5px;top:448px;font-size:12.6px">15.639</div>
<div class="cell" style="left:595px;top:448px;font-size:12.6px">25.451</div>
<div class="cell" style="left:27px;top:468px;width:108px;text-align:right;font-size:12.6px">11.06.2019</div>
<div class="cell" style="left:140px;top:468px;width:148px;text-align:right;font-size:12.6px">27,86</div>
<div class="cell" style="left:293.5px;top:468px;font-size:12.6px">38.558</div>
<div class="cell" style="left:445.5px;top:468px;font-size:12.6px">15.764</div>
<div class="cell" style="left:595px;top:468px;font-size:12.6px">25.578</div>
<div class="cell" style="left:27px;top:488px;width:108px;text-align:right;font-size:12.6px">12.06.2019</div>
<div class="cell" style="left:140px;top:488px;width:148px;text-align:right;font-size:12.6px">28,14</div>
<div class="cell" style="left:293.5px;top:488px;font-size:12.6px">39.136</div>
<div class="cell" style="left:445.5px;top:488px;font-size:12.6px">15.891</div>
<div class="cell" style="left:595px;top:488px;font-size:12.6px">25.706</div>
<div class="cell" style="left:27px;top:508px;width:108px;text-align:right;font-size:12.6px">13.06.2019</div>
<div class="cell" style="left:140px;top:508px;width:148px;text-align:right;font-size:12.6px">28,42</div>
<div class="cell" style="left:293.5px;top:508px;font-size:12.6px">39.723</div>
<div class="cell" style="left:445.5px;top:508px;font-size:12.6px">16.018</div>
<div class="cell" style="left:595px;top:508px;font-size:12.6px">25.835</div>
<div class="cell" style="left:27px;top:528px;width:108px;text-align:right;font-size:12.6px">14.06.2019</div>
<div class="cell" style="left:140px;top:528px;width:148px;text-align:right;font-size:12.6px">28,71</div>
<div class="cell" style="left:293.5px;top:528px;font-size:12.6px">40.319</div>
<div class="cell" style="left:445.5px;top:528px;font-size:12.6px">16.146</div>
<div class="cell" style="left:595px;top:528px;font-size:12.6px">25.964</div>
<div class="cell" style="left:27px;top:548px;width:108px;text-align:right;font-size:12.6px">15.06.2019</div>
<div class="cell" style="left:140px;top:548px;width:148px;text-align:right;font-size:12.6px">28,99</div>
<div class="cell" style="left:293.5px;top:548px;font-size:12.6px">40.924</div>
<div class="cell" style="left:445.5px;top:548px;font-size:12.6px">16.275</div>
<div class="cell" style="left:595px;top:548px;font-size:12.6px">26.094</div>
<div class="a" style="left:136px;top:262px;width:156px;height:303px;border:2px solid #00743f"></div>
<div class="a" style="left:138px;top:264px;width:152px;height:299px;border:1px solid #fff"></div>
<div class="a" style="left:287px;top:560px;width:7px;height:7px;background:#00743f;border:1px solid #fff"></div>
<div class="a" style="left:131px;top:258px;width:166px;height:312px;border:3px solid #ff0000;border-radius:8px"></div>
<div class="a" style="left:1009px;top:206px;width:15px;height:15px;background:#fff;border:1px solid #ababab"></div>
<svg class="a" style="left:1012px;top:210px" width="9" height="6"><path d="M0 5.5L4.5 1 9 5.5z" fill="#6a6a6a"/></svg>
<div class="a" style="left:1009px;top:220px;width:15px;height:411px;background:#fff;border:1px solid #ababab"></div>
<div class="a" style="left:1010px;top:631px;width:13px;height:21px;background:repeating-conic-gradient(#d2d2d2 0 25%,#ececec 0 50%) 0 0/2px 2px"></div>
<div class="a" style="left:1009px;top:652px;width:15px;height:15px;background:#fff;border:1px solid #ababab"></div>
<svg class="a" style="left:1012px;top:657px" width="9" height="6"><path d="M0 0.5L4.5 5 9 0.5z" fill="#6a6a6a"/></svg>
<div class="a" style="left:1px;top:667px;width:1026px;height:27px;background:#e6e6e6"></div>
<div class="a" style="left:1px;top:666px;width:1005px;height:1px;background:#ababab"></div>
<svg class="a" style="left:27px;top:675px" width="6" height="10"><path d="M5.5 0.5L0.5 5l5 4.5z" fill="#c0c0c0"/></svg>
<svg class="a" style="left:56px;top:675px" width="6" height="10"><path d="M0.5 0.5L5.5 5l-5 4.5z" fill="#c0c0c0"/></svg>
<div class="a" style="left:101px;top:666px;width:107px;height:26px;background:#fff;border:1px solid #ababab;border-top:none;border-bottom:none"></div>
<div class="a" style="left:101px;top:689px;width:107px;height:2px;background:#00743f"></div>
<div class="t" style="left:113.2px;top:674.23px;font-size:12.72px;color:#00743f;transform:scaleY(1.08);transform-origin:0 10.77px;font-weight:bold">microexcel.ru</div>
<svg class="a" style="left:240px;top:671px" width="18" height="18"><circle cx="9" cy="9" r="7.5" fill="none" stroke="#6a6a6a" stroke-width="1.2"/><path d="M9 5v8M5 9h8" stroke="#6a6a6a" stroke-width="1.6"/></svg>
<div class="a" style="left:616px;top:674px;width:2px;height:2px;background:#a0a0a0"></div>
<div class="a" style="left:616px;top:678px;width:2px;height:2px;background:#a0a0a0"></div>
<div class="a" style="left:616px;top:682px;width:2px;height:2px;background:#a0a0a0"></div>
<div class="a" style="left:633px;top:673px;width:15px;height:15px;background:#fff;border:1px solid #ababab"></div>
<svg class="a" style="left:637px;top:676px" width="6" height="9"><path d="M5 0.5L0.5 4.5 5 8.5z" fill="#6a6a6a"/></svg>
<div class="a" style="left:647px;top:673px;width:306px;height:15px;background:#fff;border:1px solid #ababab"></div>
<div class="a" style="left:953px;top:674px;width:38px;height:13px;background:repeating-conic-gradient(#d2d2d2 0 25%,#ececec 0 50%) 0 0/2px 2px"></div>
<div class="a" style="left:991px;top:673px;width:15px;height:15px;background:#fff;border:1px solid #ababab"></div>
<svg class="a" style="left:996px;top:676px" width="6" height="9"><path d="M0.5 0.5L5 4.5 0.5 8.5z" fill="#6a6a6a"/></svg>
<div class="a" style="left:1px;top:694px;width:1026px;height:22px;background:#f3f3f3"></div>
<div class="a" style="left:1px;top:694px;width:1026px;height:1px;background:#d4d4d4"></div>
<div class="t" style="left:9.3px;top:699.21px;font-size:11.56px;color:#262626;transform:scaleY(1.08);transform-origin:0 9.79px;">Готово</div>
<svg class="a" style="left:72px;top:697px" width="16" height="16" viewBox="0 0 16 16">
<circle cx="4.5" cy="4" r="3" fill="#555"/><rect x="8" y="2" width="6" height="2.6" fill="#404040"/>
<path d="M2.5 8.5v5.5h11v-9.5" fill="none" stroke="#404040" stroke-width="1.1"/><rect x="7" y="7" width="2" height="1.2" fill="#404040"/><rect x="10" y="7" width="2" height="1.2" fill="#404040"/><rect x="4" y="9" width="2" height="1.2" fill="#404040"/><rect x="7" y="9" width="2" height="1.2" fill="#404040"/><rect x="10" y="9" width="2" height="1.2" fill="#404040"/><rect x="4" y="11" width="2" height="1.2" fill="#404040"/><rect x="7" y="11" width="2" height="1.2" fill="#404040"/><rect x="10" y="11" width="2" height="1.2" fill="#404040"/></svg>
<div class="t" style="left:446px;top:698.72px;font-size:10.96px;color:#262626;transform:scaleY(1.08);transform-origin:0 9.28px;">Среднее: 27,07</div>
<div class="t" style="left:540px;top:699.43px;font-size:11.3px;color:#262626;transform:scaleY(1.08);transform-origin:0 9.57px;">Количество: 15</div>
<div class="t" style="left:636.5px;top:698.98px;font-size:10.66px;color:#262626;transform:scaleY(1.08);transform-origin:0 9.02px;">Сумма: 406,01</div>
<div class="a" style="left:727px;top:695px;width:38px;height:21px;background:#c6c6c6"></div>
<svg class="a" style="left:739px;top:698px" width="14" height="14" viewBox="0 0 14 14"><path d="M0.5 0.5h13v13h-13zM4.8 0.5v13M9.2 0.5v13M0.5 4.8h13M0.5 9.2h13" fill="none" stroke="#606060" stroke-width="1.3"/></svg>
<svg class="a" style="left:777px;top:698px" width="14" height="14" viewBox="0 0 14 14">
<rect x="0.75" y="0.75" width="12.5" height="12.5" fill="none" stroke="#6a6a6a" stroke-width="1.5"/><rect x="3.5" y="3.5" width="7" height="7" fill="none" stroke="#6a6a6a" stroke-width="1"/><path d="M5 5.5h4M5 7.5h4M5 9.5h4" stroke="#6a6a6a" stroke-width="1"/></svg>
<svg class="a" style="left:815px;top:698px" width="14" height="14" viewBox="0 0 14 14">
<rect x="0.75" y="0.75" width="12.5" height="12.5" fill="none" stroke="#6a6a6a" stroke-width="1.5"/><path d="M5.5 0.5v6.5H1M9.5 0.5v6.5H5.5" fill="none" stroke="#6a6a6a" stroke-width="1.2"/></svg>
<div class="a" style="left:846px;top:704px;width:6px;height:2px;background:#505050"></div>
<div class="a" style="left:856px;top:705px;width:100px;height:1px;background:#a8a8a8"></div>
<div class="a" style="left:904px;top:699px;width:5px;height:11px;background:#6a6a6a"></div>
<div class="a" style="left:959px;top:704px;width:8px;height:2px;background:#505050"></div>
<div class="a" style="left:962px;top:701px;width:2px;height:8px;background:#505050"></div>
<div class="t" style="left:978px;top:700.16px;font-size:10.44px;color:#262626;transform:scaleY(1.08);transform-origin:0 8.84px;">100 %</div>
<div class="a" style="left:0;top:0;width:1px;height:717px;background:#00743f"></div>
<div class="a" style="left:1027px;top:0;width:1px;height:717px;background:#00743f"></div>
<div class="a" style="left:0;top:716px;width:1028px;height:1px;background:#00743f"></div>
</body></html>
